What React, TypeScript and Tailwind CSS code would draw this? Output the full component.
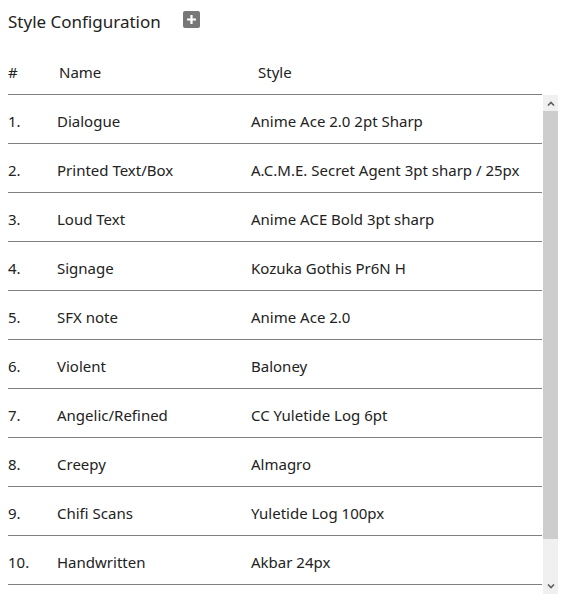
import React from 'react';

const rows: [string, string][] = [
  ['Dialogue', 'Anime Ace 2.0 2pt Sharp'],
  ['Printed Text/Box', 'A.C.M.E. Secret Agent 3pt sharp / 25px'],
  ['Loud Text', 'Anime ACE Bold 3pt sharp'],
  ['Signage', 'Kozuka Gothis Pr6N H'],
  ['SFX note', 'Anime Ace 2.0'],
  ['Violent', 'Baloney'],
  ['Angelic/Refined', 'CC Yuletide Log 6pt'],
  ['Creepy', 'Almagro'],
  ['Chifi Scans', 'Yuletide Log 100px'],
  ['Handwritten', 'Akbar 24px'],
];

const App: React.FC = () => {
  return (
    <div className="w-[578px] h-[606px] bg-white pl-2 text-[#222] font-['Noto_Sans',sans-serif] overflow-hidden">
      <div className="h-[44px] flex items-center">
        <span className="text-[17px]">Style Configuration</span>
        <button className="ml-[22px] mb-[6px] w-[17px] h-[17px] rounded-[2px] bg-[#777] flex items-center justify-center">
          <svg width="11" height="11" viewBox="0 0 11 11">
            <path d="M5.5 1v9M1 5.5h9" stroke="white" strokeWidth="2.2" />
          </svg>
        </button>
      </div>

      <div className="w-[534px] h-[51px] pt-[6px] flex items-center border-b border-[#808080] text-[15px]">
        <span className="w-[51px]">#</span>
        <span className="w-[199px]">Name</span>
        <span>Style</span>
      </div>

      <div className="flex h-[499px]">
        <div className="w-[534px] overflow-hidden">
          {rows.map(([name, style], i) => (
            <div key={i} className="h-[49px] pt-[4px] flex items-center border-b border-[#808080] text-[15px]">
              <span className="w-[49px]">{i + 1}.</span>
              <span className="w-[194px]">{name}</span>
              <span>{style}</span>
            </div>
          ))}
        </div>

        <div className="ml-[1px] w-[15px] bg-[#f0f0f0] flex flex-col">
          <div className="h-[16px] flex items-center justify-center">
            <svg width="8" height="5" viewBox="0 0 8 5">
              <path d="M1 4.5L4 1.5L7 4.5" stroke="#606060" strokeWidth="1.6" fill="none" />
            </svg>
          </div>
          <div className="h-[428px] bg-[#cdcdcd]" />
          <div className="flex-1" />
          <div className="h-[16px] flex items-center justify-center">
            <svg width="8" height="5" viewBox="0 0 8 5">
              <path d="M1 0.5L4 3.5L7 0.5" stroke="#606060" strokeWidth="1.6" fill="none" />
            </svg>
          </div>
        </div>
      </div>
    </div>
  );
};

export default App;
